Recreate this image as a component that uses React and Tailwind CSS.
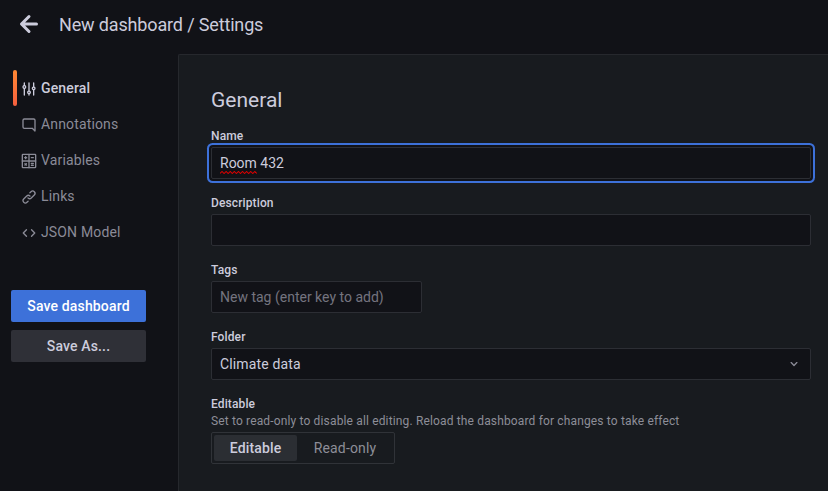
function Icon({ className, children }) {
  return (
    <svg viewBox="0 0 24 24" fill="currentColor" className={className} aria-hidden="true">
      {children}
    </svg>
  );
}

const stroke = { fill: 'none', stroke: 'currentColor', strokeWidth: 2, strokeLinecap: 'round', strokeLinejoin: 'round' };

const tabs = [
  {
    label: 'General',
    active: true,
    icon: <path d="M20,8.18V3a1,1,0,0,0-2,0V8.18a3,3,0,0,0,0,5.64V21a1,1,0,0,0,2,0V13.82a3,3,0,0,0,0-5.64ZM19,12a1,1,0,1,1,1-1A1,1,0,0,1,19,12Zm-6,2.18V3a1,1,0,0,0-2,0V14.18a3,3,0,0,0,0,5.64V21a1,1,0,0,0,2,0V19.82a3,3,0,0,0,0-5.64ZM12,18a1,1,0,1,1,1-1A1,1,0,0,1,12,18ZM6,6.18V3A1,1,0,0,0,4,3V6.18a3,3,0,0,0,0,5.64V21a1,1,0,0,0,2,0V11.82A3,3,0,0,0,6,6.18ZM5,10A1,1,0,1,1,6,9,1,1,0,0,1,5,10Z" />,
  },
  {
    label: 'Annotations',
    icon: <path d="M19,2H5A3,3,0,0,0,2,5V15a3,3,0,0,0,3,3H16.59l3.7,3.71A1,1,0,0,0,21,22a.84.84,0,0,0,.38-.08A1,1,0,0,0,22,21V5A3,3,0,0,0,19,2Zm1,16.59-2.29-2.3A1,1,0,0,0,17,16H5a1,1,0,0,1-1-1V5A1,1,0,0,1,5,4H19a1,1,0,0,1,1,1Z" />,
  },
  {
    label: 'Variables',
    icon: (
      <g {...stroke}>
        <rect x="2" y="2" width="20" height="20" rx="1" />
        <path d="M12 2v20M2 12h20M5.5 7h3M7 5.5v3M15.5 7h3M5.9 15.9l2.2 2.2M8.1 15.9l-2.2 2.2M15.5 15.7h3M15.5 18.5h3" />
      </g>
    ),
  },
  {
    label: 'Links',
    icon: <path d="M10,17.55,8.23,19.27a2.47,2.47,0,0,1-3.5-3.5l4.54-4.55a2.46,2.46,0,0,1,3.39-.09l.12.1a1,1,0,0,0,1.4-1.43A2.75,2.75,0,0,0,14,9.59a4.46,4.46,0,0,0-6.09.22L3.31,14.36a4.48,4.48,0,0,0,6.33,6.33L11.37,19A1,1,0,0,0,10,17.55ZM20.69,3.31a4.49,4.49,0,0,0-6.33,0L12.63,5A1,1,0,0,0,14,6.45l1.73-1.72a2.47,2.47,0,0,1,3.5,3.5l-4.54,4.55a2.46,2.46,0,0,1-3.39.09l-.12-.1a1,1,0,0,0-1.4,1.43,2.75,2.75,0,0,0,.23.21,4.47,4.47,0,0,0,6.09-.22l4.55-4.55A4.49,4.49,0,0,0,20.69,3.31Z" />,
  },
  {
    label: 'JSON Model',
    icon: <path {...stroke} d="M8.2 7L3.4 12l4.8 5M15.8 7L20.6 12l-4.8 5" />,
  },
];

function Field({ label, children }) {
  return (
    <div className="mb-4">
      <div className="mb-[3px] h-4 text-xs leading-4 font-medium tracking-[0.12px]">{label}</div>
      {children}
    </div>
  );
}

const box = 'flex h-8 items-center rounded-xs border border-[#2c2e34] bg-[#111217] px-2';

export default function App() {
  return (
    <div className="flex h-[491px] w-[828px] flex-col overflow-hidden bg-[#111217] font-['Roboto',sans-serif] text-sm tracking-[0.15px] text-[#ccccdc]">
      <header className="flex h-[54px] shrink-0 items-start pt-1.5 pl-[11px]">
        <Icon className="size-9">
          <path d="M17,11H9.41l3.3-3.29a1,1,0,1,0-1.42-1.42l-5,5a1,1,0,0,0-.21.33,1,1,0,0,0,0,.76,1,1,0,0,0,.21.33l5,5a1,1,0,0,0,1.42,0,1,1,0,0,0,0-1.42L9.41,13H17a1,1,0,0,0,0-2Z" />
        </Icon>
        <h1 className="ml-3 text-lg leading-[38px] font-normal tracking-[-0.15px]">New dashboard / Settings</h1>
      </header>
      <div className="flex min-h-0 flex-1">
        <aside className="w-[178px] shrink-0 pt-4">
          <nav className="ml-[13px]">
            {tabs.map((t) => (
              <a
                key={t.label}
                className={t.active ? 'flex h-9 items-center font-medium' : 'flex h-9 items-center text-[#8b8b97]'}
              >
                <span className={t.active ? 'h-9 w-1 rounded-xs bg-linear-to-b from-[#ff8833] to-[#f55f3e]' : 'h-9 w-1'} />
                <Icon className="mt-0.5 ml-1 size-4">{t.icon}</Icon>
                <span className="ml-1">{t.label}</span>
              </a>
            ))}
          </nav>
          <div className="mt-10 ml-[11px] flex w-[135px] flex-col gap-2 font-medium">
            <button className="h-8 rounded-xs bg-[#3d71d9] text-white">Save dashboard</button>
            <button className="h-8 rounded-xs bg-[#2f3037]">Save As...</button>
          </div>
        </aside>
        <main className="flex-1 rounded-tl-xs border-t border-l border-[#26282d] bg-[#181b1f] pt-8 pl-8">
          <h2 className="mb-[17px] h-6 text-[21px] leading-[26px] font-normal tracking-normal">General</h2>
          <div className="w-[600px]">
            <Field label="Name">
              <div className={`${box} tracking-normal ring-2 ring-[#3d71d9] ring-offset-2 ring-offset-[#111217]`}>
                <span className="relative">
                  Room
                  <svg className="absolute bottom-[-1px] left-0 h-[3px] w-full" viewBox="0 0 36 3" preserveAspectRatio="none" fill="none" aria-hidden="true">
                    <path
                      d="M0 2.5L2 .5L4 2.5L6 .5L8 2.5L10 .5L12 2.5L14 .5L16 2.5L18 .5L20 2.5L22 .5L24 2.5L26 .5L28 2.5L30 .5L32 2.5L34 .5L36 2.5"
                      stroke="#e00000"
                    />
                  </svg>
                </span>
                <span className="whitespace-pre"> 432</span>
              </div>
            </Field>
            <Field label="Description">
              <div className={box} />
            </Field>
            <Field label="Tags">
              <div className={`${box} w-[211px] tracking-normal text-[#74747f]`}>New tag (enter key to add)</div>
            </Field>
            <Field label="Folder">
              <div className={`${box} justify-between`}>
                <span>Climate data</span>
                <Icon className="size-4 text-[#8b8b97]">
                  <path d="M17,9.17a1,1,0,0,0-1.41,0L12,12.71,8.46,9.17a1,1,0,0,0-1.41,0,1,1,0,0,0,0,1.42l4.24,4.24a1,1,0,0,0,1.42,0L17,10.59A1,1,0,0,0,17,9.17Z" />
                </Icon>
              </div>
            </Field>
            <div className="h-4 text-xs leading-4 font-medium tracking-[0.12px]">Editable</div>
            <div className="h-[18px] text-xs leading-[18px] text-[#8d8e98]">
              Set to read-only to disable all editing. Reload the dashboard for changes to take effect
            </div>
            <div className="mt-0.5 flex h-8 w-[184px] rounded-xs border border-[#303338] p-0.5">
              <div className="flex w-[83px] items-center justify-center rounded-xs bg-[#2b2e33] font-medium">Editable</div>
              <div className="flex flex-1 items-center justify-center pl-px text-[#8d8e98]">Read-only</div>
            </div>
          </div>
        </main>
      </div>
    </div>
  );
}
